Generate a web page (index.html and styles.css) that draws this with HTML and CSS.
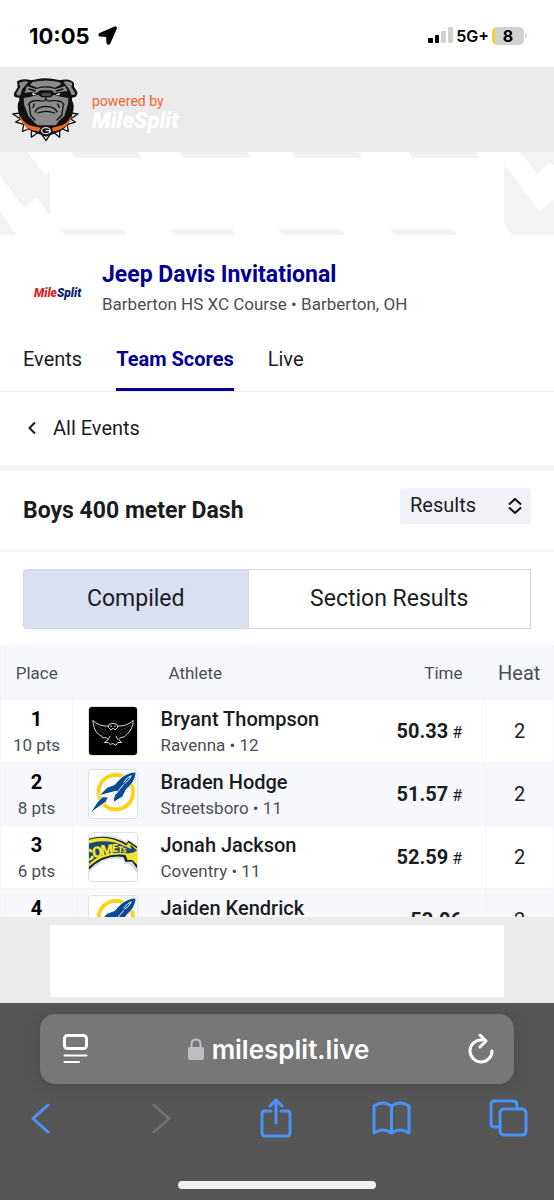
FILE: index.html
```html
<!DOCTYPE html>
<html lang="en">
<head>
    <meta charset="UTF-8">
    <meta name="viewport" content="width=device-width, initial-scale=1.0">
    <title>Jeep Davis Invitational</title>
    <link rel="stylesheet" href="styles.css">
</head>
<body>

    <!-- Shared team logo -->
    <svg class="sprite" width="0" height="0" aria-hidden="true">
        <symbol id="rocket" viewBox="0 0 50 50">
            <circle cx="28" cy="23" r="18" fill="none" stroke="#fcd116" stroke-width="4"/>
            <path d="M49 2 C40 2 32 8 27 15 L19 18 L10 27 L21 24 L29 22 L26 28 L25 34 L35 28 L39 20 C45 15 49 9 49 2Z" fill="#084a93" stroke="#fff" stroke-width="1"/>
            <path d="M28 25 L36 15 M36 13 Q40 7 44 6 Q42 11 37 14" stroke="#fff" stroke-width="1" fill="none"/>
            <path d="M1 45 L9 33 L14 28 L20 28 L18 33Z" fill="#084a93" stroke="#fff" stroke-width="1"/>
        </symbol>
    </svg>

    <div class="status-bar">
        <div class="status-time">
            <span>10:05</span>
            <svg width="19" height="19" viewBox="0 0 19 19" aria-hidden="true">
                <path d="M17 1.500 L2 8 Q1 9 2 9.500 L9 10 L9.500 17 Q10.500 18.500 11.500 17 L17.800 2.500 Q18 1 17 1.500Z" fill="#000" stroke="#000" stroke-width="2" stroke-linejoin="round"/>
            </svg>
        </div>
        <div class="status-icons">
            <svg width="25" height="17" viewBox="0 0 25 17" aria-hidden="true">
                <rect x="0" y="11" width="5" height="5" rx="1" fill="#000"/>
                <rect x="7" y="8" width="4" height="8" rx="1" fill="#000"/>
                <rect x="13" y="4" width="5" height="12" rx="1" fill="#d1d1d1"/>
                <rect x="20" y="0" width="5" height="16" rx="1" fill="#d1d1d1"/>
            </svg>
            <span class="network">5G+</span>
            <span class="battery">8</span>
            <span class="battery-tip"></span>
        </div>
    </div>

    <header class="site-header">
        <svg width="80" height="80" viewBox="0 0 240 240" role="img" aria-label="Bulldogs">
            <g fill="#fff" stroke="#111" stroke-width="4" stroke-linejoin="round">
                <path d="M23 132 L48 129 L46 146Z"/>
                <path d="M32 156 L51 145 L60 164Z"/>
                <path d="M52 184 L57 160 L78 174Z"/>
                <path d="M79 202 L80 176 L101 186Z"/>
                <path d="M108 190 L137 190 L123 212Z"/>
                <path d="M164 202 L144 186 L164 176Z"/>
                <path d="M190 184 L166 174 L186 160Z"/>
                <path d="M211 156 L185 164 L194 145Z"/>
                <path d="M219 132 L197 146 L195 129Z"/>
            </g>
            <path d="M36 34 Q50 25 73 29 Q84 31 94 28 Q120 22 150 28 Q160 31 173 29 Q199 26 207 39 L207 50 L217 66 Q219 83 201 83 L201 91 Q209 105 204 126 Q197 165 166 184 L123 200 L80 184 Q47 164 40 126 Q35 104 43 91 L43 83 Q23 84 27 70 L38 52Z" fill="#111"/>
            <path d="M45 137 Q59 164 84 169 L107 173 L102 185 Q62 181 45 146Z M199 137 Q187 164 160 169 L141 173 L144 185 Q184 178 199 146Z" fill="#f26a21"/>
            <g fill="#8b8b8b">
                <path d="M42 39 Q58 31 70 36 L52 57 L46 75 Q35 80 34 70 L46 50Z"/>
                <path d="M202 39 Q186 31 175 36 L192 57 L200 75 Q211 77 210 68 L199 51Z"/>
                <path d="M82 36 Q122 27 162 36 L169 43 L150 53 Q123 45 96 53 L75 45Z"/>
                <path d="M66 48 L92 57 Q121 48 152 57 L180 48 L188 63 L163 66 L150 70 L139 61 L107 61 L93 70 L78 66 L59 69Z"/>
                <path d="M56 84 L78 80 L99 74 L108 80 L137 80 L147 74 L167 80 L190 84 L189 102 L178 138 L162 152 Q154 164 151 166 L98 166 Q90 160 84 152 L70 138 L57 103Z"/>
            </g>
            <g fill="none" stroke="#111" stroke-width="4" stroke-linecap="round">
                <path d="M81 34 L67 46 M164 34 L180 46 M72 57 L91 63 M174 57 L154 63"/>
                <path d="M70 104 Q76 90 102 92 Q117 96 123 88 Q130 96 144 92 Q169 90 177 104"/>
                <path d="M73 105 L77 136 L90 150 M175 105 L170 136 L156 150"/>
                <path d="M123 80 V88 M91 126 Q95 110 123 109 Q151 110 156 126"/>
                <path d="M98 129 Q123 119 149 129"/>
                <path d="M88 102 L84 112 M158 102 L163 112"/>
            </g>
            <path d="M81 68 L95 74 L84 76Z M166 68 L151 74 L162 76Z" fill="#fff"/>
            <path d="M105 69 Q123 63 142 69 L137 80 L110 80Z" fill="#4b4b4b" stroke="#111" stroke-width="4"/>
            <ellipse cx="123" cy="182" rx="19" ry="14" fill="#111"/>
            <ellipse cx="123" cy="182" rx="13" ry="9" fill="#111" stroke="#ddd" stroke-width="4"/>
            <path d="M122 182 h12 v6" stroke="#ddd" stroke-width="4" fill="none"/>
        </svg>
        <div class="powered">
            <span class="powered-by">powered by</span>
            <span class="powered-logo">MileSplit</span>
        </div>
    </header>

    <div class="ad-banner">
        <svg class="ad-pattern" viewBox="0 0 554 83" preserveAspectRatio="none" aria-hidden="true">
            <g fill="#f3f3f3">
                <path d="M0 0 H28 L45 23 L50 19 V64 L36 45 L24 56 L0 24Z"/>
                <path d="M0 59 L16 83 H0Z"/>
                <path d="M71 0 H138 L142 6 H75Z M179 0 H247 L251 6 H184Z M291 0 H358 L362 6 H295Z M409 0 H476 L480 6 H413Z"/>
                <path d="M60 77 H123 L127 83 H65Z M170 77 H232 L236 83 H175Z M278 77 H341 L345 83 H283Z M390 77 H453 L457 83 H395Z"/>
                <path d="M504 13 L540 59 L554 48 V83 H512 L504 72Z"/>
                <path d="M520 0 H554 V13 L549 11 L537 22Z"/>
            </g>
        </svg>
    </div>

    <main class="content">
        <section class="meet">
            <div class="meet-logo"><span>Mile</span>Split</div>
            <div>
                <h1>Jeep Davis Invitational</h1>
                <p>Barberton HS XC Course • Barberton, OH</p>
            </div>
        </section>

        <nav class="tabs">
            <a href="#">Events</a>
            <a href="#" class="active">Team Scores</a>
            <a href="#">Live</a>
        </nav>

        <a href="#" class="all-events">
            <svg width="8" height="14" viewBox="0 0 8 14" aria-hidden="true">
                <path d="M7 1.500 L1.500 7 L7 12.500" fill="none" stroke="#1b1c1f" stroke-width="2"/>
            </svg>
            All Events
        </a>

        <div class="event-bar">
            <h2>Boys 400 meter Dash</h2>
            <div class="select-wrap">
                <select aria-label="View">
                    <option>Results</option>
                </select>
                <svg width="14" height="16" viewBox="0 0 14 16" aria-hidden="true">
                    <path d="M1 6.500 L7 1 L13 6.500 M1 9.500 L7 15 L13 9.500" fill="none" stroke="#111" stroke-width="2"/>
                </svg>
            </div>
        </div>

        <div class="result-type">
            <button type="button" class="selected">Compiled</button>
            <button type="button">Section Results</button>
        </div>

        <table class="results">
            <thead>
                <tr>
                    <th class="place">Place</th>
                    <th class="team"></th>
                    <th class="athlete">Athlete</th>
                    <th class="time">Time</th>
                    <th class="heat">Heat</th>
                </tr>
            </thead>
            <tbody>
                <tr>
                    <td class="place"><b>1</b><small>10 pts</small></td>
                    <td class="team">
                        <svg class="team-logo" viewBox="0 0 50 50" role="img" aria-label="Ravenna">
                            <rect width="50" height="50" fill="#000"/>
                            <g fill="none" stroke="#e4e4e4" stroke-width="1" stroke-linejoin="round">
                                <path d="M20 20 Q10 20 4 14 Q5 26 11 29 L13 30 L14 32 L18 32 L20 34 L16 37 L20 37 L22 39 L25 38 L28 40 L30 37 L34 37 L31 34 L33 32 L37 31 L39 29 Q46 23 46 14 Q40 20 30 20"/>
                                <path d="M6 19 L16 24 L20 27 M8 24 L18 28 M44 19 L34 24 L30 27 M42 24 L32 28" stroke="#333"/>
                                <path d="M20 21 L21 18 L25 17 L29 18 L30 21 L27 24 L25 22 L23 24Z M22 20 H24 M26 20 H28 M22 30 L20 34 M28 30 L30 34"/>
                            </g>
                        </svg>
                    </td>
                    <td class="athlete"><a href="#">Bryant Thompson</a><small>Ravenna • 12</small></td>
                    <td class="time"><b>50.33</b> #</td>
                    <td class="heat">2</td>
                </tr>
                <tr>
                    <td class="place"><b>2</b><small>8 pts</small></td>
                    <td class="team"><svg class="team-logo" role="img" aria-label="Streetsboro"><use href="#rocket"/></svg></td>
                    <td class="athlete"><a href="#">Braden Hodge</a><small>Streetsboro • 11</small></td>
                    <td class="time"><b>51.57</b> #</td>
                    <td class="heat">2</td>
                </tr>
                <tr>
                    <td class="place"><b>3</b><small>6 pts</small></td>
                    <td class="team">
                        <svg class="team-logo" viewBox="0 0 50 50" role="img" aria-label="Coventry">
                            <path d="M0 5 Q20 -2 39 9 L40 6 L50 13 V42 L43 33 L37 32 L35 27 Q15 24 0 41Z" fill="#d5d8e3"/>
                            <path d="M0 6 Q20 0 39 11 L41 8 L50 14 V37 L45 30 L38 30 L36 25 Q16 22 0 38Z" fill="#182433"/>
                            <path d="M0 7 Q20 1 39 13 L41 10 L50 16 V33 L45 28 L40 28 L38 23 Q17 20 0 35Z" fill="#eee326"/>
                            <path d="M0 11 Q19 5 38 14 L42 16 L44 17 L43 12 L50 18 L47 20 L42 21 L37 21 Q15 18 0 32Z" fill="#1b4778"/>
                            <g class="comets">
                                <text x="-6" y="28" font-size="17" transform="rotate(-12 3 24)">C</text>
                                <text x="3" y="26" font-size="16" transform="rotate(-10 6 20)">O</text>
                                <text x="12" y="23" font-size="15" transform="rotate(-5 16 18)">M</text>
                                <text x="24" y="20" font-size="11">E</text>
                                <text x="30" y="20" font-size="9" transform="rotate(5 30 16)">T</text>
                                <text x="35" y="20" font-size="7" transform="rotate(8 35 16)">S</text>
                            </g>
                        </svg>
                    </td>
                    <td class="athlete"><a href="#">Jonah Jackson</a><small>Coventry • 11</small></td>
                    <td class="time"><b>52.59</b> #</td>
                    <td class="heat">2</td>
                </tr>
                <tr>
                    <td class="place"><b>4</b><small>5 pts</small></td>
                    <td class="team"><svg class="team-logo" role="img" aria-label="Streetsboro"><use href="#rocket"/></svg></td>
                    <td class="athlete"><a href="#">Jaiden Kendrick</a><small>Streetsboro • 12</small></td>
                    <td class="time"><b>53.06</b></td>
                    <td class="heat">2</td>
                </tr>
            </tbody>
        </table>
    </main>

    <div class="bottom-ad"><div></div></div>

    <footer class="browser-bar">
        <div class="address-bar">
            <button type="button" aria-label="Page menu">
                <svg width="26" height="30" viewBox="0 0 26 30">
                    <g fill="none" stroke="#fff" stroke-width="3" stroke-linecap="round">
                        <rect x="1.500" y="1.500" width="22" height="13" rx="3"/>
                        <path d="M1.500 21.500 H23.500 M1.500 28 H16" stroke-width="2"/>
                    </g>
                </svg>
            </button>
            <div class="address">
                <svg width="16" height="23" viewBox="0 0 16 23" aria-hidden="true">
                    <rect x="0" y="9" width="16" height="13" rx="2" fill="#bdbcc2"/>
                    <path d="M3.500 10 V6 Q3.500 1.500 8 1.500 T12.500 6 V10" fill="none" stroke="#bdbcc2" stroke-width="2"/>
                </svg>
                <span>milesplit.live</span>
            </div>
            <button type="button" aria-label="Reload">
                <svg width="26" height="30" viewBox="0 0 26 30">
                    <path d="M14 6 A11 11 0 1 0 24 17 M12 1 L18 7 L12 13" fill="none" stroke="#fff" stroke-width="3" stroke-linecap="round" stroke-linejoin="round"/>
                </svg>
            </button>
        </div>

        <div class="browser-actions">
            <button type="button" aria-label="Back">
                <svg width="40" height="40" viewBox="0 0 40 40"><path d="M28 7 L13 20.500 L28 34"/></svg>
            </button>
            <button type="button" class="off" aria-label="Forward" disabled>
                <svg width="40" height="40" viewBox="0 0 40 40"><path d="M17 7 L32 20.500 L17 34"/></svg>
            </button>
            <button type="button" aria-label="Share">
                <svg width="40" height="40" viewBox="0 0 40 40"><path d="M17 13 H11 Q8 13 8 16 V34 Q8 38 11 38 H33 Q36 38 36 34 V16 Q36 13 33 13 H27 M22 25 V2 M16 8 L22 2 L28 8"/></svg>
            </button>
            <button type="button" aria-label="Bookmarks">
                <svg width="40" height="40" viewBox="0 0 40 40"><path d="M20.500 8 Q12 2 3 8 V35 Q12 29 20.500 35 Q29 29 38 35 V8 Q29 2 20.500 8 V35"/></svg>
            </button>
            <button type="button" aria-label="Tabs">
                <svg width="40" height="40" viewBox="0 0 40 40"><path d="M10 29 H7 Q3 29 3 25 V6 Q3 3 7 3 H25 Q29 3 29 7 V10"/><rect x="12" y="11" width="26" height="26" rx="4"/></svg>
            </button>
        </div>

        <div class="home-indicator"></div>
    </footer>

</body>
</html>
```
FILE: styles.css
```css
* {
    box-sizing: border-box;
}

body {
    margin: 0;
    height: 100vh;
    display: flex;
    flex-direction: column;
    overflow: hidden;
    background-color: #fff;
    color: #1b1c1f;
    font-family: Roboto, sans-serif;
    font-size: 20px;
}

h1, h2, p {
    margin: 0;
}

a {
    color: inherit;
    text-decoration: none;
}

button {
    font: inherit;
    color: inherit;
    background: none;
    border: none;
    padding: 0;
    cursor: pointer;
}

svg {
    display: block;
    flex: none;
}

.sprite {
    position: absolute;
}

/* Phone status bar */
.status-bar {
    flex: none;
    display: flex;
    justify-content: space-between;
    align-items: center;
    height: 67px;
    padding: 4px 27px 0 29px;
    color: #000;
    font-family: Inter, sans-serif;
    font-weight: 700;
}

.status-time,
.status-icons {
    display: flex;
    align-items: center;
}

.status-time {
    gap: 8px;
    font-size: 22px;
}

.network {
    margin: 0 3px;
    font-size: 16px;
    font-weight: 600;
}

.battery {
    width: 32px;
    height: 18px;
    border-radius: 5px;
    background: linear-gradient(to right, #fccf2f 3px, #d1d1d1 3px);
    font-size: 16px;
    line-height: 18px;
    text-align: center;
}

.battery-tip {
    width: 2px;
    height: 5px;
    margin-left: 1px;
    border-radius: 0 2px 2px 0;
    background-color: #d1d1d1;
}

/* Header */
.site-header {
    flex: none;
    display: flex;
    align-items: center;
    gap: 7px;
    height: 85px;
    padding: 0 5px;
    background-color: #ebebeb;
}

.powered {
    display: flex;
    flex-direction: column;
    padding-top: 7px;
}

.powered-by {
    color: #f26531;
    font-size: 14px;
    line-height: 16px;
}

.powered-logo {
    color: #fff;
    font-size: 22px;
    font-style: italic;
    font-weight: 900;
    line-height: 24px;
}

.ad-banner {
    flex: none;
    height: 83px;
}

.ad-pattern {
    width: 100%;
    height: 100%;
}

/* Meet page, cut off above the bottom ad */
.content {
    flex: 1;
    min-height: 0;
    overflow: hidden;
}

.meet {
    display: flex;
    align-items: center;
    gap: 18px;
    padding: 25px 24px 0 34px;
}

.meet-logo {
    width: 50px;
    padding-top: 8px;
    color: #0a1f62;
    font-size: 12px;
    font-style: italic;
    font-weight: 900;
}

.meet-logo span {
    color: #d9252a;
}

.meet h1 {
    color: #000093;
    font-size: 23px;
    line-height: 30px;
}

.meet p {
    color: #4b4d55;
    font-size: 17px;
    line-height: 28px;
}

.tabs {
    display: flex;
    gap: 34px;
    padding: 24px 23px 0;
    border-bottom: 1px solid #ededf0;
}

.tabs a {
    height: 49px;
    line-height: 34px;
}

.tabs .active {
    color: #000093;
    font-weight: 700;
    border-bottom: 3px solid #000093;
}

.all-events {
    display: flex;
    align-items: center;
    gap: 17px;
    height: 79px;
    padding: 0 28px 2px;
    border-bottom: 6px solid #f3f3f4;
}

.event-bar {
    display: flex;
    justify-content: space-between;
    align-items: center;
    height: 81px;
    padding: 0 23px;
    border-bottom: 2px solid #f6f6f8;
}

.event-bar h2 {
    font-size: 23px;
}

.select-wrap {
    position: relative;
    margin-bottom: 10px;
}

.select-wrap select {
    width: 131px;
    height: 36px;
    padding: 0 10px 2px;
    border: none;
    border-radius: 4px;
    background-color: #f1f1f8;
    color: #1b1c1f;
    font: inherit;
    appearance: none;
}

.select-wrap svg {
    position: absolute;
    top: 10px;
    right: 9px;
    pointer-events: none;
}

.result-type {
    display: flex;
    margin: 17px 23px 16px;
}

.result-type button {
    height: 60px;
    padding: 0 63px 2px;
    border: 1px solid #d3d6da;
    font-size: 23px;
}

.result-type button + button {
    flex: 1;
    padding: 0 0 2px;
    border-left: none;
}

.result-type .selected {
    background-color: #d9dfef;
    border-radius: 4px 0 0 4px;
}

/* Results table */
.results {
    width: 100%;
    border-collapse: collapse;
    border: 1px solid #f3f4f7;
}

.results th {
    height: 54px;
    padding: 0;
    background-color: #f7f8fc;
    color: #4b4d55;
    font-size: 17px;
    font-weight: 400;
}

.results td {
    height: 63px;
    padding: 0;
    border-top: 1px solid #f3f4f7;
}

.results tbody tr:nth-child(even) {
    background-color: #f7f8fc;
}

.results small {
    display: block;
    color: #4b4d55;
    font-size: 17px;
    line-height: 24px;
}

.results .place {
    width: 72px;
    text-align: center;
}

.place b {
    display: block;
    color: #000;
    font-weight: 700;
    line-height: 28px;
}

.results td.place {
    border-right: 1px solid #f3f4f7;
}

.results .team {
    width: 88px;
    padding-left: 15px;
}

.team-logo {
    width: 50px;
    height: 50px;
    border: 1px solid #dfe1e6;
    border-radius: 4px;
    background-color: #fff;
}

.comets {
    fill: #f5e52b;
    font-weight: 900;
}

.results .athlete {
    text-align: left;
}

.results th.athlete {
    padding-left: 8px;
}

.athlete a {
    display: block;
    font-weight: 500;
    line-height: 28px;
}

.results .time {
    padding-right: 23px;
    text-align: right;
}

.results td.time {
    font-size: 16px;
}

.time b {
    font-size: 20px;
}

.results .heat {
    width: 68px;
    font-size: 20px;
    text-align: center;
}

.results td.heat {
    border-left: 1px solid #f3f4f7;
}

.bottom-ad {
    flex: none;
    height: 86px;
    padding: 8px 50px 6px;
    background-color: #ebebeb;
}

.bottom-ad div {
    height: 100%;
    background-color: #fff;
}

/* Browser controls */
.browser-bar {
    flex: none;
    height: 197px;
    padding-top: 11px;
    background-color: #565656;
}

.address-bar {
    display: flex;
    justify-content: space-between;
    align-items: center;
    height: 70px;
    margin: 0 40px;
    padding: 0 20px 0 23px;
    border-radius: 15px;
    background-color: #777;
    box-shadow: 0 2px 16px rgba(0,0,0,0.15);
}

.address {
    display: flex;
    align-items: center;
    gap: 8px;
    color: #fff;
    font-family: Inter, sans-serif;
    font-size: 26px;
    font-weight: 600;
}

.browser-actions {
    display: flex;
    justify-content: space-between;
    padding: 14px 26px 0 20px;
}

.browser-actions svg {
    fill: none;
    stroke: #4894fa;
    stroke-width: 3;
    stroke-linecap: round;
    stroke-linejoin: round;
}

.browser-actions .off svg {
    stroke: #707070;
}

.home-indicator {
    width: 198px;
    height: 8px;
    margin: 43px auto 0;
    border-radius: 4px;
    background-color: #f0f0f0;
}
```
